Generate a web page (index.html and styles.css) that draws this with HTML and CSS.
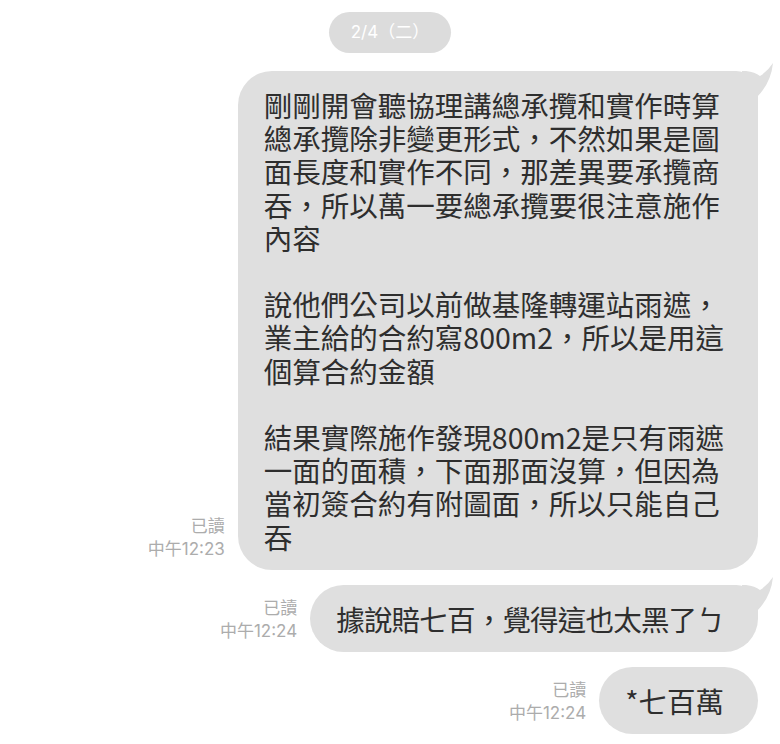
FILE: index.html
```html
<!DOCTYPE html>
<html lang="zh-Hant">
<head>
  <meta charset="UTF-8">
  <title>聊天</title>
  <link rel="stylesheet" href="styles.css">
</head>
<body>

  <div class="chat">
    <div class="date-pill">2/4（二）</div>

    <div class="msg">
      <div class="meta">
        <div>已讀</div>
        <div>中午12:23</div>
      </div>
      <div class="bubble has-tail">剛剛開會聽協理講總承攬和實作時算
總承攬除非變更形式，不然如果是圖
面長度和實作不同，那差異要承攬商
吞，所以萬一要總承攬要很注意施作
內容

說他們公司以前做基隆轉運站雨遮，
業主給的合約寫800m2，所以是用這
個算合約金額

結果實際施作發現800m2是只有雨遮
一面的面積，下面那面沒算，但因為
當初簽合約有附圖面，所以只能自己
吞<svg class="tail" width="32" height="44" viewBox="0 0 32 44"><path d="M0 8 L4 8 Q13 9 18 13 Q26 8 31 0 Q29 20 15 34 L0 34 Z"/></svg></div>
    </div>

    <div class="msg">
      <div class="meta">
        <div>已讀</div>
        <div>中午12:24</div>
      </div>
      <div class="bubble has-tail short">據說賠七百，覺得這也太黑了ㄅ<svg class="tail" width="32" height="44" viewBox="0 0 32 44"><path d="M0 8 L4 8 Q13 9 18 13 Q26 8 31 0 Q29 20 15 34 L0 34 Z"/></svg></div>
    </div>

    <div class="msg">
      <div class="meta">
        <div>已讀</div>
        <div>中午12:24</div>
      </div>
      <div class="bubble">*七百萬</div>
    </div>
  </div>

</body>
</html>
```

FILE: styles.css
```css
body {
  margin: 0;
  background: #fff;
  font-family: "Noto Sans CJK TC", "Noto Sans", sans-serif;
  color: #2e2e2e;
}

.chat {
  padding: 12px 22px 0 0;
}

.date-pill {
  width: 122px;
  height: 41px;
  margin: 0 auto;
  position: relative;
  left: 11px;
  border-radius: 21px;
  background: #dcdcdc;
  color: #fff;
  font-family: "Inter", "Noto Sans CJK TC", sans-serif;
  font-size: 17px;
  line-height: 41px;
  text-align: center;
}

.msg {
  display: flex;
  justify-content: flex-end;
  align-items: flex-end;
  gap: 13px;
  margin-top: 15px;
}

.date-pill + .msg {
  margin-top: 18px;
}

.meta {
  text-align: right;
  color: #acacac;
  font-family: "Inter", "Noto Sans CJK TC", sans-serif;
  font-size: 17px;
  line-height: 23px;
  margin-bottom: 9px;
}

.bubble {
  position: relative;
  background: #dfdfdf;
  border-radius: 34px;
  padding: 17px 34px 17px 26px;
  font-size: 28.5px;
  line-height: 33.2px;
  white-space: pre-line;
}

.bubble.has-tail {
  border-top-right-radius: 22px;
}

.bubble.short {
  letter-spacing: -0.8px;
}

.tail {
  position: absolute;
  top: -8px;
  right: -16px;
  fill: #dfdfdf;
}
```
